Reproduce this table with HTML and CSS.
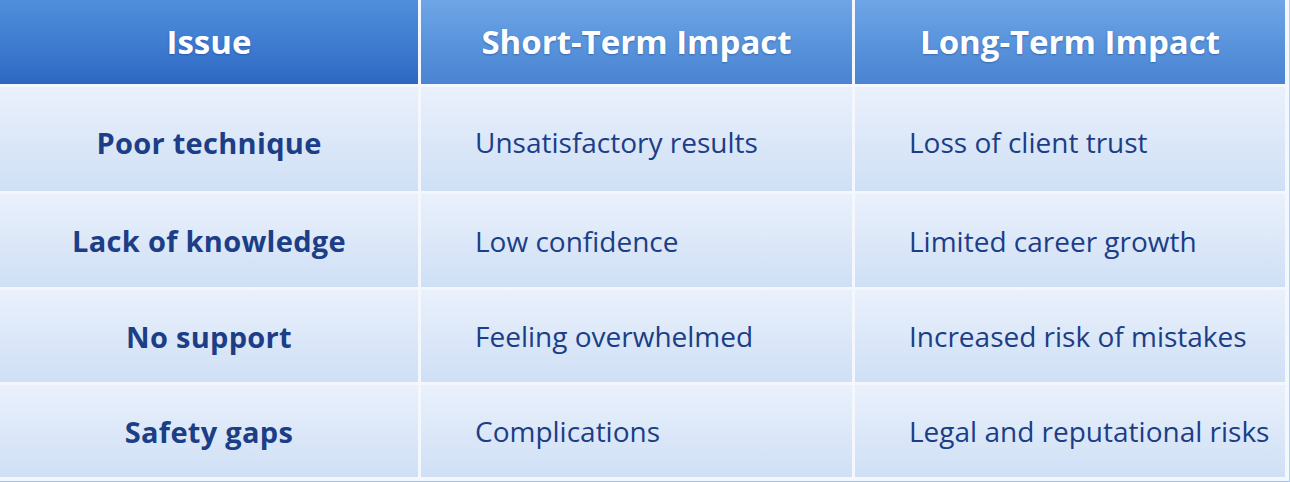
FILE: index.html
```html
<!DOCTYPE html>
<html lang="en">
<head>
    <meta charset="UTF-8">
    <title>Impact Table</title>
    <link rel="stylesheet" href="styles.css">
</head>
<body>

<div class="table">
    <div class="cell head">Issue</div>
    <div class="cell head">Short-Term Impact</div>
    <div class="cell head">Long-Term Impact</div>

    <div class="cell issue first">Poor technique</div>
    <div class="cell first">Unsatisfactory results</div>
    <div class="cell first">Loss of client trust</div>

    <div class="cell issue">Lack of knowledge</div>
    <div class="cell">Low confidence</div>
    <div class="cell">Limited career growth</div>

    <div class="cell issue">No support</div>
    <div class="cell">Feeling overwhelmed</div>
    <div class="cell">Increased risk of mistakes</div>

    <div class="cell issue">Safety gaps</div>
    <div class="cell">Complications</div>
    <div class="cell">Legal and reputational risks</div>
</div>

</body>
</html>
```

FILE: styles.css
```css
* {
    box-sizing: border-box;
}

body {
    margin: 0;
    font-family: "Open Sans", Lato, sans-serif;
    background-color: #a6c6ee;
}

.table {
    display: grid;
    grid-template-columns: 418px 431px 430px;
    grid-template-rows: 84px 104px 93px 92px 92px;
    gap: 3px;
    width: 1290px;
    height: 482px;
    padding: 0 4px 4px 0;
    background-color: #f4f8fe;
    border-right: 1px solid #b5cff0;
    border-bottom: 1px solid #9dbfea;
}

.cell {
    display: flex;
    align-items: center;
    padding: 0 0 0 54px;
    font-size: 28px;
    color: #1b3e86;
    background: linear-gradient(180deg, #eaf1fc 0%, #dbe7f8 55%, #cfe0f5 100%);
}

.cell.first {
    padding-top: 6px;
}

.cell.head {
    justify-content: center;
    padding: 0 0 2px 0;
    font-size: 33px;
    font-weight: 700;
    color: #ffffff;
    text-shadow: 0 1px 2px rgba(20, 60, 130, 0.45);
    background: linear-gradient(180deg, #6ea6e6 0%, #5a94dc 50%, #4a84d2 100%);
}

.cell.head:first-child {
    background: linear-gradient(180deg, #4f8fdb 0%, #3d7bd0 55%, #2d68c0 100%);
}

.cell.issue {
    justify-content: center;
    padding-left: 0;
    font-size: 29px;
    font-weight: 700;
    letter-spacing: 0.3px;
}
```
